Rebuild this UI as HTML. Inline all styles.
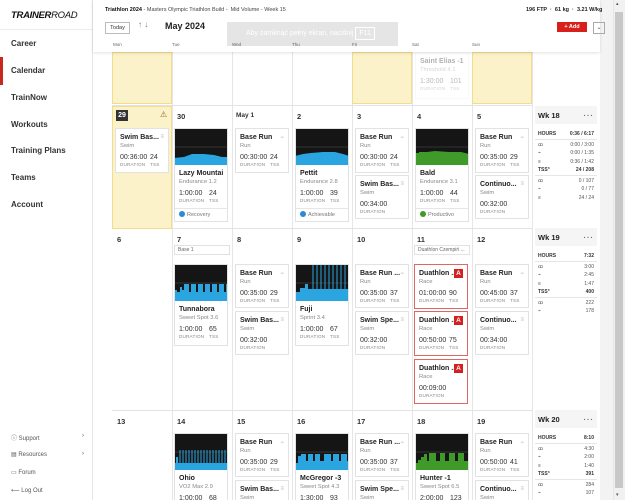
<!DOCTYPE html><html><head><meta charset="utf-8"><style>
*{margin:0;padding:0;box-sizing:border-box}
html{width:625px;height:500px;overflow:hidden}
body{width:625px;height:500px;overflow:hidden;font-family:"Liberation Sans",sans-serif;background:#fff;position:relative;color:#222}
.a{position:absolute}
.side{left:0;top:0;width:93px;height:500px;background:#fff;border-right:1px solid #e6e6e6}
.nav{position:absolute;left:11px;font-size:8px;font-weight:bold;color:#333}
.bot{position:absolute;left:11px;font-size:6px;color:#555}
.col{position:absolute;top:52px;height:448px;border-left:1px solid #e6e6e6}
.rowl{position:absolute;left:112px;width:421px;height:1px;background:#e3e3e3}
.dn{position:absolute;font-size:7.5px;font-weight:bold;color:#333}
.c{position:absolute;width:54px;background:#fff;border:1px solid #e2e2e2;padding:4px 4px 3px;overflow:hidden}
.c.r{border:1px solid #e06666}
.t{font-size:7px;font-weight:bold;color:#222;line-height:9px;white-space:nowrap;overflow:hidden}
.s{font-size:5.8px;color:#888;line-height:8px}
.n{font-size:7px;color:#333;line-height:8px;margin-top:4px}
.n span{display:inline-block;width:30px}
.l{font-size:4.6px;color:#888;line-height:6px;letter-spacing:.2px}
.l span{display:inline-block;width:30px}
.ch{display:block;width:54px;height:37px;margin:-5px -5px 4px -5px}
.ic{position:absolute;right:4px;top:5px;font-size:6px;color:#bbb}
.A{position:absolute;right:4px;top:4px;width:9px;height:9px;background:#d32020;color:#fff;font-size:6.5px;font-weight:bold;text-align:center;line-height:9px}
.ft{border-top:1px solid #e6e6e6;margin:4px -4px -3px;padding:2px 4px;font-size:5.5px;color:#777;line-height:7px}
.dot{display:inline-block;width:6px;height:6px;border-radius:50%;vertical-align:-1px;margin-right:2px}
.wk{position:absolute;left:535px;width:62px;font-size:5px;color:#555}
.wkh{background:#f5f5f5;height:18px;padding:5px 3px;font-size:7.5px;font-weight:bold;color:#222}
.wkh b{float:right;letter-spacing:1px;color:#666}
.sr{display:flex;justify-content:space-between;line-height:8.5px;padding:0 3px}
.sh{font-weight:bold;color:#333;border-bottom:1px solid #e6e6e6;margin-bottom:1px}
.yel{position:absolute;background:#fcf2c9;border:1px solid #f2dc8e}
.lab{position:absolute;font-size:5px;color:#666;padding:1px 3px;border:1px solid #e2e2e2;background:#fff}
</style></head><body>

<div class="a side">
<div class="a" style="left:11px;top:10px;font-size:9.5px;font-weight:bold;font-style:italic;letter-spacing:-.3px;color:#111">TRAINER<span style="font-weight:normal">ROAD</span></div>
<div class="a" style="left:0;top:29px;width:92px;height:1px;background:#ececec"></div>
<div class="nav" style="top:39px">Career</div>
<div class="a" style="left:0;top:57px;width:3px;height:28px;background:#c8281e"></div>
<div class="nav" style="top:66px">Calendar</div>
<div class="nav" style="top:93px">TrainNow</div>
<div class="nav" style="top:120px">Workouts</div>
<div class="nav" style="top:146px">Training Plans</div>
<div class="nav" style="top:173px">Teams</div>
<div class="nav" style="top:200px">Account</div>
<div class="bot" style="top:433px">ⓘ Support<span style="position:absolute;left:71px">›</span></div>
<div class="bot" style="top:451px">▤ Resources<span style="position:absolute;left:71px">›</span></div>
<div class="bot" style="top:469px">▭ Forum</div>
<div class="bot" style="top:487px">⟵ Log Out</div>
</div>

<div class="a" style="left:600px;top:0;width:13px;height:500px;background:#f3f3f3"></div>
<div class="a" style="left:613px;top:0;width:12px;height:500px;background:#f1f1f1;border-left:1px solid #e6e6e6"></div>
<div class="a" style="left:615px;top:12px;width:8px;height:476px;background:#c8c8c8"></div>
<div class="a" style="left:616px;top:1px;font-size:5px;color:#555">▴</div>
<div class="a" style="left:616px;top:492px;font-size:5px;color:#555">▾</div>

<div class="col" style="left:172px"></div><div class="col" style="left:232px"></div><div class="col" style="left:292px"></div><div class="col" style="left:352px"></div><div class="col" style="left:412px"></div><div class="col" style="left:472px"></div><div class="col" style="left:532px"></div>
<div class="rowl" style="top:105px"></div><div class="rowl" style="top:228px"></div><div class="rowl" style="top:410px"></div>

<div class="yel" style="left:112px;top:52px;width:60px;height:52px"></div>
<div class="yel" style="left:352px;top:52px;width:60px;height:52px"></div>
<div class="yel" style="left:472px;top:52px;width:60px;height:52px"></div>
<div class="c" style="left:415px;top:52px;height:47px;opacity:.35;border-color:#eee"><div class="t">Saint Elias -1</div><div class="s">Threshold 4.1</div><div class="n"><span>1:30:00</span>101</div><div class="l"><span>DURATION</span>TSS</div></div>

<div class="a" style="left:93px;top:0;width:507px;height:52px;background:#fff;box-shadow:0 1px 3px rgba(0,0,0,.12)"></div>
<div class="a" style="left:105px;top:7px;font-size:5.5px;color:#444"><b style="color:#111">Triathlon 2024</b> - Masters Olympic Triathlon Build - &nbsp;Mid Volume - Week 15</div>
<div class="a" style="left:526px;top:7px;font-size:5.5px;font-weight:bold;color:#222">196 FTP &nbsp;·&nbsp; 61 kg &nbsp;·&nbsp; 3.21 W/kg</div>
<div class="a" style="left:105px;top:22px;width:25px;height:12px;border:1px solid #bbb;font-size:5.5px;text-align:center;line-height:10px;color:#333">Today</div>
<div class="a" style="left:138px;top:20px;font-size:8px;color:#777">↑ ↓</div>
<div class="a" style="left:165px;top:21px;font-size:9px;font-weight:bold;color:#222">May 2024</div>
<div class="a" style="left:227px;top:22px;width:171px;height:24px;background:#e5e5e5;color:#fff;font-size:7px;line-height:24px;padding-left:19px;white-space:nowrap;overflow:hidden">Aby zamknąć pełny ekran, naciśnij <span style="border:1px solid #fff;padding:2px 3px">F11</span></div>
<div class="a" style="left:557px;top:22px;width:30px;height:10px;background:#d7201a;color:#fff;font-size:5.5px;font-weight:bold;text-align:center;line-height:10px">+ Add</div>
<div class="a" style="left:593px;top:22px;width:12px;height:12px;border:1px solid #aaa;font-size:6px;text-align:center;line-height:10px;color:#555">⌄</div>
<div class="a" style="top:42px;left:113px;font-size:4.5px;color:#666;width:420px"><span class="a" style="left:0">Mon</span><span class="a" style="left:59px">Tue</span><span class="a" style="left:119px">Wed</span><span class="a" style="left:179px">Thu</span><span class="a" style="left:239px">Fri</span><span class="a" style="left:299px">Sat</span><span class="a" style="left:359px">Sun</span></div>

<!-- Week 18 -->
<div class="yel" style="left:112px;top:106px;width:60px;height:123px"></div>
<div class="a" style="left:116px;top:110px;width:12px;height:11px;background:#333;color:#fff;font-size:7px;font-weight:bold;text-align:center;line-height:11px">29</div>
<div class="a" style="left:160px;top:110px;font-size:8px;color:#8a6a2a">⚠</div>
<div class="dn" style="left:177px;top:112px">30</div>
<div class="dn" style="left:236px;top:112px;font-size:6.5px">May 1</div>
<div class="dn" style="left:297px;top:112px">2</div>
<div class="dn" style="left:357px;top:112px">3</div>
<div class="dn" style="left:417px;top:112px">4</div>
<div class="dn" style="left:477px;top:112px">5</div>

<div class="c" style="left:115px;top:128px;height:45px"><span class="ic">≡</span><div class="t">Swim Bas...</div><div class="s">Swim</div><div class="n"><span>00:36:00</span>24</div><div class="l"><span>DURATION</span>TSS</div></div>

<div class="c" style="left:174px;top:128px;height:94px"><svg class="ch" viewBox="0 0 54 37" preserveAspectRatio="none"><rect width="54" height="37" fill="#151515"/><line x1="0" y1="19" x2="54" y2="19" stroke="#555" stroke-width=".5"/><path d="M0 37V30L10 29L18 26L30 26L40 27L48 29L54 29V37Z" fill="#2aa5e0"/></svg><div class="t">Lazy Mountain</div><div class="s">Endurance 1.2</div><div class="n"><span>1:00:00</span>24</div><div class="l"><span>DURATION</span>TSS</div><div class="ft"><span class="dot" style="background:#2a8ad8"></span>Recovery</div></div>

<div class="c" style="left:235px;top:128px;height:45px"><span class="ic">⌁</span><div class="t">Base Run</div><div class="s">Run</div><div class="n"><span>00:30:00</span>24</div><div class="l"><span>DURATION</span>TSS</div></div>

<div class="c" style="left:295px;top:128px;height:94px"><svg class="ch" viewBox="0 0 54 37" preserveAspectRatio="none"><rect width="54" height="37" fill="#151515"/><line x1="0" y1="19" x2="54" y2="19" stroke="#555" stroke-width=".5"/><path d="M0 37V28L8 26L16 25L28 24L40 24L48 26L54 28V37Z" fill="#2aa5e0"/></svg><div class="t">Pettit</div><div class="s">Endurance 2.8</div><div class="n"><span>1:00:00</span>39</div><div class="l"><span>DURATION</span>TSS</div><div class="ft"><span class="dot" style="background:#2a8ad8"></span>Achievable</div></div>

<div class="c" style="left:355px;top:128px;height:45px"><span class="ic">⌁</span><div class="t">Base Run</div><div class="s">Run</div><div class="n"><span>00:30:00</span>24</div><div class="l"><span>DURATION</span>TSS</div></div>
<div class="c" style="left:355px;top:175px;height:44px"><span class="ic">≡</span><div class="t">Swim Bas...</div><div class="s">Swim</div><div class="n">00:34:00</div><div class="l">DURATION</div></div>

<div class="c" style="left:415px;top:128px;height:94px"><svg class="ch" viewBox="0 0 54 37" preserveAspectRatio="none"><rect width="54" height="37" fill="#151515"/><line x1="0" y1="19" x2="54" y2="19" stroke="#555" stroke-width=".5"/><path d="M0 37V25L4 25L4 24L12 24L20 23L34 24L46 24L54 26V37Z" fill="#3f9a2a"/></svg><div class="t">Bald</div><div class="s">Endurance 3.1</div><div class="n"><span>1:00:00</span>44</div><div class="l"><span>DURATION</span>TSS</div><div class="ft"><span class="dot" style="background:#3f9a2a"></span>Productivo</div></div>

<div class="c" style="left:475px;top:128px;height:45px"><span class="ic">⌁</span><div class="t">Base Run</div><div class="s">Run</div><div class="n"><span>00:35:00</span>29</div><div class="l"><span>DURATION</span>TSS</div></div>
<div class="c" style="left:475px;top:175px;height:44px"><span class="ic">≡</span><div class="t">Continuo...</div><div class="s">Swim</div><div class="n">00:32:00</div><div class="l">DURATION</div></div>

<div class="wk" style="top:106px"><div class="wkh">Wk 18<b>···</b></div>
<div style="height:6px"></div>
<div class="sr sh"><span>HOURS</span><span>0:36 / 6:17</span></div>
<div class="sr"><span>ꝏ</span><span>0:00 / 3:00</span></div><div class="sr"><span>⌁</span><span>0:00 / 1:35</span></div><div class="sr"><span>≡</span><span>0:36 / 1:42</span></div>
<div class="sr sh"><span>TSS°</span><span>24 / 208</span></div>
<div class="sr"><span>ꝏ</span><span>0 / 107</span></div><div class="sr"><span>⌁</span><span>0 / 77</span></div><div class="sr"><span>≡</span><span>24 / 24</span></div></div>

<!-- Week 19 -->
<div class="dn" style="left:117px;top:235px">6</div>
<div class="dn" style="left:177px;top:235px">7</div>
<div class="dn" style="left:237px;top:235px">8</div>
<div class="dn" style="left:297px;top:235px">9</div>
<div class="dn" style="left:357px;top:235px">10</div>
<div class="dn" style="left:417px;top:235px">11</div>
<div class="dn" style="left:477px;top:235px">12</div>
<div class="lab" style="left:174px;top:245px;width:56px">Base 1</div>
<div class="lab" style="left:414px;top:245px;width:56px;white-space:nowrap;overflow:hidden">Duathlon Czempiń ...</div>

<div class="c" style="left:174px;top:264px;height:82px"><svg class="ch" viewBox="0 0 54 37" preserveAspectRatio="none"><rect width="54" height="37" fill="#151515"/><line x1="0" y1="19" x2="54" y2="19" stroke="#555" stroke-width=".5"/><path d="M0 37V26H3V28H6V23H8V26H10V20H15V28H17V20H22V28H24V20H29V28H31V20H36V28H38V20H43V28H45V20H50V28H52V20H54V37Z" fill="#2aa5e0"/></svg><div class="t">Tunnabora</div><div class="s">Sweet Spot 3.6</div><div class="n"><span>1:00:00</span>65</div><div class="l"><span>DURATION</span>TSS</div></div>

<div class="c" style="left:235px;top:264px;height:44px"><span class="ic">⌁</span><div class="t">Base Run</div><div class="s">Run</div><div class="n"><span>00:35:00</span>29</div><div class="l"><span>DURATION</span>TSS</div></div>
<div class="c" style="left:235px;top:311px;height:44px"><span class="ic">≡</span><div class="t">Swim Bas...</div><div class="s">Swim</div><div class="n">00:32:00</div><div class="l">DURATION</div></div>

<div class="c" style="left:295px;top:264px;height:82px"><svg class="ch" viewBox="0 0 54 37" preserveAspectRatio="none"><rect width="54" height="37" fill="#151515"/><line x1="0" y1="19" x2="54" y2="19" stroke="#555" stroke-width=".5"/><path d="M0 37V28H5V24H10V20H13V25H54V37Z" fill="#2aa5e0"/><g stroke="#2aa5e0" stroke-width="1"><path d="M18 0V25M22 0V25M26 0V25M30 0V25M34 0V25M38 0V25M42 0V25M46 0V25M50 0V25"/></g></svg><div class="t">Fuji</div><div class="s">Sprint 3.4</div><div class="n"><span>1:00:00</span>67</div><div class="l"><span>DURATION</span>TSS</div></div>

<div class="c" style="left:355px;top:264px;height:44px"><span class="ic">⌁</span><div class="t">Base Run ...</div><div class="s">Run</div><div class="n"><span>00:35:00</span>37</div><div class="l"><span>DURATION</span>TSS</div></div>
<div class="c" style="left:355px;top:311px;height:44px"><span class="ic">≡</span><div class="t">Swim Spe...</div><div class="s">Swim</div><div class="n">00:32:00</div><div class="l">DURATION</div></div>

<div class="c r" style="left:414px;top:264px;height:45px"><span class="A">A</span><div class="t">Duathlon ...</div><div class="s">Race</div><div class="n"><span>01:00:00</span>90</div><div class="l"><span>DURATION</span>TSS</div></div>
<div class="c r" style="left:414px;top:311px;height:45px"><span class="A">A</span><div class="t">Duathlon ...</div><div class="s">Race</div><div class="n"><span>00:50:00</span>75</div><div class="l"><span>DURATION</span>TSS</div></div>
<div class="c r" style="left:414px;top:359px;height:45px"><span class="A">A</span><div class="t">Duathlon ...</div><div class="s">Race</div><div class="n">00:09:00</div><div class="l">DURATION</div></div>

<div class="c" style="left:475px;top:264px;height:44px"><span class="ic">⌁</span><div class="t">Base Run</div><div class="s">Run</div><div class="n"><span>00:45:00</span>37</div><div class="l"><span>DURATION</span>TSS</div></div>
<div class="c" style="left:475px;top:311px;height:44px"><span class="ic">≡</span><div class="t">Continuo...</div><div class="s">Swim</div><div class="n">00:34:00</div><div class="l">DURATION</div></div>

<div class="wk" style="top:228px"><div class="wkh">Wk 19<b>···</b></div>
<div style="height:6px"></div>
<div class="sr sh"><span>HOURS</span><span>7:32</span></div>
<div class="sr"><span>ꝏ</span><span>3:00</span></div><div class="sr"><span>⌁</span><span>2:45</span></div><div class="sr"><span>≡</span><span>1:47</span></div>
<div class="sr sh"><span>TSS°</span><span>400</span></div>
<div class="sr"><span>ꝏ</span><span>222</span></div><div class="sr"><span>⌁</span><span>178</span></div></div>

<!-- Week 20 -->
<div class="dn" style="left:117px;top:417px">13</div>
<div class="dn" style="left:177px;top:417px">14</div>
<div class="dn" style="left:237px;top:417px">15</div>
<div class="dn" style="left:297px;top:417px">16</div>
<div class="dn" style="left:357px;top:417px">17</div>
<div class="dn" style="left:417px;top:417px">18</div>
<div class="dn" style="left:477px;top:417px">19</div>

<div class="c" style="left:174px;top:433px;height:67px;border-bottom:none"><svg class="ch" viewBox="0 0 54 37" preserveAspectRatio="none"><rect width="54" height="37" fill="#151515"/><line x1="0" y1="19" x2="54" y2="19" stroke="#555" stroke-width=".5"/><path d="M0 37V30H2V24H4V30H54V37Z" fill="#2aa5e0"/><g stroke="#2aa5e0" stroke-width="1"><path d="M6 17V32M9 17V32M12 17V32M15 17V32M18 17V32M21 17V32M24 17V32M27 17V32M30 17V32M33 17V32M36 17V32M39 17V32M42 17V32M45 17V32M48 17V32M51 17V32"/></g></svg><div class="t">Ohio</div><div class="s">VO2 Max 2.9</div><div class="n"><span>1:00:00</span>68</div></div>
<div class="c" style="left:235px;top:433px;height:44px"><span class="ic">⌁</span><div class="t">Base Run</div><div class="s">Run</div><div class="n"><span>00:35:00</span>29</div><div class="l"><span>DURATION</span>TSS</div></div>
<div class="c" style="left:235px;top:480px;height:20px;border-bottom:none"><span class="ic">≡</span><div class="t">Swim Bas...</div><div class="s">Swim</div></div>
<div class="c" style="left:295px;top:433px;height:67px;border-bottom:none"><svg class="ch" viewBox="0 0 54 37" preserveAspectRatio="none"><rect width="54" height="37" fill="#151515"/><line x1="0" y1="19" x2="54" y2="19" stroke="#555" stroke-width=".5"/><path d="M0 37V30H3V23H6V21H11V28H13V21H18V28H20V21H25V28H29V21H36V28H38V21H44V28H46V21H52V28H54V37Z" fill="#2aa5e0"/></svg><div class="t">McGregor -3</div><div class="s">Sweet Spot 4.3</div><div class="n"><span>1:30:00</span>93</div></div>
<div class="c" style="left:355px;top:433px;height:44px"><span class="ic">⌁</span><div class="t">Base Run ...</div><div class="s">Run</div><div class="n"><span>00:35:00</span>37</div><div class="l"><span>DURATION</span>TSS</div></div>
<div class="c" style="left:355px;top:480px;height:20px;border-bottom:none"><span class="ic">≡</span><div class="t">Swim Spe...</div><div class="s">Swim</div></div>
<div class="c" style="left:415px;top:433px;height:67px;border-bottom:none"><svg class="ch" viewBox="0 0 54 37" preserveAspectRatio="none"><rect width="54" height="37" fill="#151515"/><line x1="0" y1="19" x2="54" y2="19" stroke="#555" stroke-width=".5"/><path d="M0 37V30H3V27H6V24H9V21H12V28H14V20H21V28H25V20H30V28H34V20H40V28H43V20H49V28H54V37Z" fill="#3f9a2a"/></svg><div class="t">Hunter -1</div><div class="s">Sweet Spot 6.5</div><div class="n"><span>2:00:00</span>123</div></div>
<div class="c" style="left:475px;top:433px;height:44px"><span class="ic">⌁</span><div class="t">Base Run</div><div class="s">Run</div><div class="n"><span>00:50:00</span>41</div><div class="l"><span>DURATION</span>TSS</div></div>
<div class="c" style="left:475px;top:480px;height:20px;border-bottom:none"><span class="ic">≡</span><div class="t">Continuo...</div><div class="s">Swim</div></div>

<div class="wk" style="top:410px"><div class="wkh">Wk 20<b>···</b></div>
<div style="height:6px"></div>
<div class="sr sh"><span>HOURS</span><span>8:10</span></div>
<div class="sr"><span>ꝏ</span><span>4:30</span></div><div class="sr"><span>⌁</span><span>2:00</span></div><div class="sr"><span>≡</span><span>1:40</span></div>
<div class="sr sh"><span>TSS°</span><span>391</span></div>
<div class="sr"><span>ꝏ</span><span>284</span></div><div class="sr"><span>⌁</span><span>107</span></div></div>

</body></html>
